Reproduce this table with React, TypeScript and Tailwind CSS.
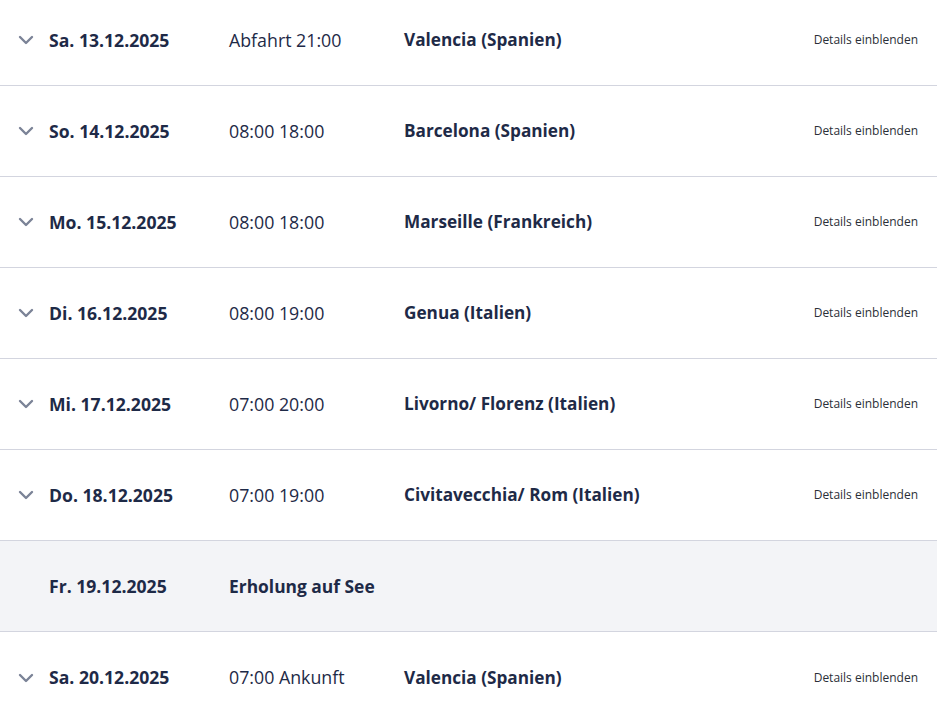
import React from "react";

type Stop = {
  date: string;
  time?: string;
  port?: string;
  sea?: string;
};

const stops: Stop[] = [
  { date: "Sa. 13.12.2025", time: "Abfahrt 21:00", port: "Valencia (Spanien)" },
  { date: "So. 14.12.2025", time: "08:00 18:00", port: "Barcelona (Spanien)" },
  { date: "Mo. 15.12.2025", time: "08:00 18:00", port: "Marseille (Frankreich)" },
  { date: "Di. 16.12.2025", time: "08:00 19:00", port: "Genua (Italien)" },
  { date: "Mi. 17.12.2025", time: "07:00 20:00", port: "Livorno/ Florenz (Italien)" },
  { date: "Do. 18.12.2025", time: "07:00 19:00", port: "Civitavecchia/ Rom (Italien)" },
  { date: "Fr. 19.12.2025", sea: "Erholung auf See" },
  { date: "Sa. 20.12.2025", time: "07:00 Ankunft", port: "Valencia (Spanien)" },
];

function Chevron() {
  return (
    <svg width="16" height="10" viewBox="0 0 16 10" fill="none" className="shrink-0">
      <path d="M2 2l6 6 6-6" stroke="#7b8397" strokeWidth="2.4" strokeLinecap="round" strokeLinejoin="round" />
    </svg>
  );
}

function Row({ stop, last }: { stop: Stop; last: boolean }) {
  const isSea = !!stop.sea;
  return (
    <div
      className={`flex items-center h-[91px] pl-[18px] pr-[19px] ${last ? "" : "border-b border-[#d3d5df]"} ${isSea ? "bg-[#f3f4f7]" : "bg-white"}`}
    >
      <div className="w-[31px] flex items-center">{!isSea && <Chevron />}</div>
      <div className="w-[180px] text-[17.6px] font-bold text-[#1e2a47]">{stop.date}</div>
      {isSea ? (
        <div className="text-[17.4px] font-bold text-[#1e2a47]">{stop.sea}</div>
      ) : (
        <>
          <div className="w-[175px] text-[17.8px] text-[#1e2a47]">{stop.time}</div>
          <div className="flex-1 text-[17.2px] font-bold text-[#1e2a47]">{stop.port}</div>
          <div className="text-[12px] text-[#2b2f38]">Details einblenden</div>
        </>
      )}
    </div>
  );
}

export default function App() {
  return (
    <div className="w-[937px] h-[719px] overflow-hidden bg-white" style={{ fontFamily: "'Open Sans', sans-serif" }}>
      <div className="-mt-[5px]">
        {stops.map((s, i) => (
          <Row key={s.date} stop={s} last={i === stops.length - 1} />
        ))}
      </div>
    </div>
  );
}
